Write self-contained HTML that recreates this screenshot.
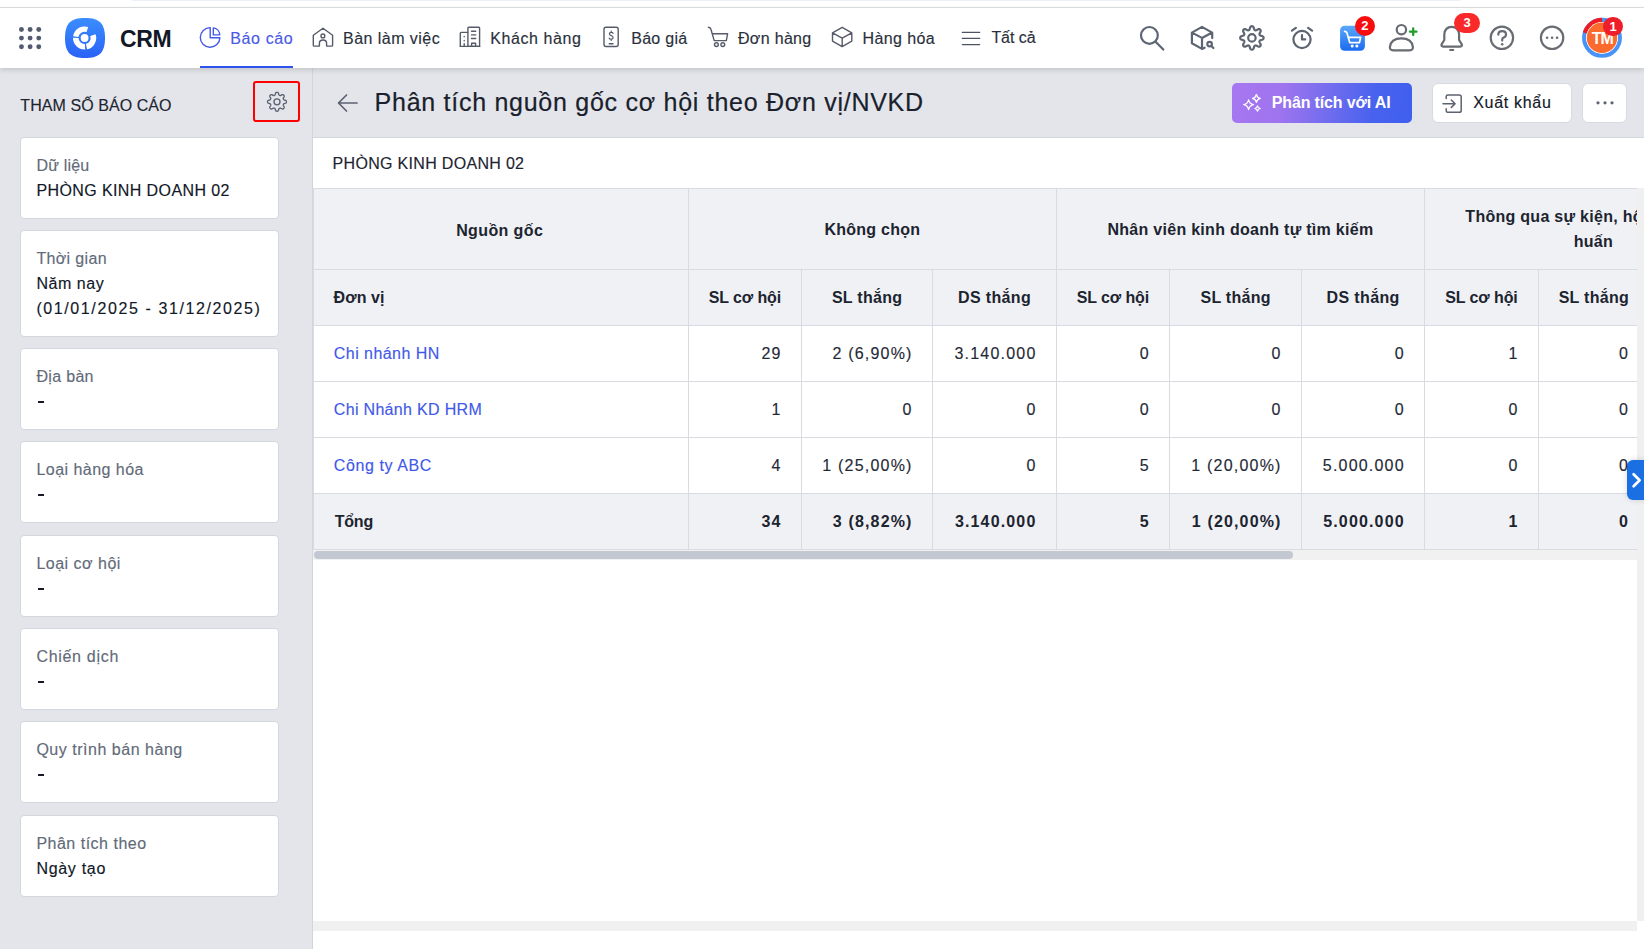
<!DOCTYPE html>
<html><head><meta charset="utf-8"><title>CRM</title>
<style>
html,body{margin:0;padding:0;}
body{width:1644px;height:949px;overflow:hidden;position:relative;background:#fff;font-family:"Liberation Sans",sans-serif;}
.t{position:absolute;white-space:nowrap;}
.r{-webkit-text-stroke:0.15px currentColor;}
.b{position:absolute;}
.ic{position:absolute;overflow:visible;z-index:2;}
.t{z-index:2;}
.badge{position:absolute;z-index:3;background:#ee1c25;color:#fff;font:700 13px/20px "Liberation Sans",sans-serif;text-align:center;}
</style></head><body>
<div class="b" style="left:132.00px;top:0.00px;width:1329.00px;height:1.00px;background:#ebf0fa;border-radius:0 0 3px 3px"></div>
<div class="b" style="left:0.00px;top:7.00px;width:1644.00px;height:1.00px;background:#dfe1e0;"></div>
<div class="b" style="left:0.00px;top:8.00px;width:1644.00px;height:60.00px;background:#fff;box-shadow:0 2px 5px rgba(0,0,0,.14);z-index:1"></div>
<svg class="ic" style="left:18.8px;top:26.8px;" width="23" height="23" viewBox="0 0 23 23"><circle cx="2.45" cy="2.45" r="2.45" fill="#535b6e"/><circle cx="2.45" cy="11.10" r="2.45" fill="#535b6e"/><circle cx="2.45" cy="19.75" r="2.45" fill="#535b6e"/><circle cx="11.10" cy="2.45" r="2.45" fill="#535b6e"/><circle cx="11.10" cy="11.10" r="2.45" fill="#535b6e"/><circle cx="11.10" cy="19.75" r="2.45" fill="#535b6e"/><circle cx="19.75" cy="2.45" r="2.45" fill="#535b6e"/><circle cx="19.75" cy="11.10" r="2.45" fill="#535b6e"/><circle cx="19.75" cy="19.75" r="2.45" fill="#535b6e"/></svg>
<svg class="ic" style="left:65.2px;top:18.1px;" width="40" height="40" viewBox="0 0 40 40"><defs><linearGradient id="lg" x1="0" y1="0" x2="0" y2="1"><stop offset="0" stop-color="#3b8dff"/><stop offset="1" stop-color="#2962f6"/></linearGradient></defs>
<path d="M20 0C34.5 0 40 5.5 40 20C40 34.5 34.5 40 20 40C5.5 40 0 34.5 0 20C0 5.5 5.5 0 20 0Z" fill="url(#lg)"/>
<path d="M8.14 18.19 A11.6 11.6 0 0 1 23.18 8.97 L21.55 14.01 A6.3 6.3 0 0 0 13.38 19.01ZM30.57 16.22 A11.6 11.6 0 0 1 22.01 31.35 L20.85 25.87 A6.0 6.0 0 0 0 25.27 18.05ZM20.21 31.58 A11.6 11.6 0 0 1 8.00 19.80 L13.60 19.90 A6.0 6.0 0 0 0 19.91 25.99Z" fill="#fff"/><circle cx="19.6" cy="20.0" r="3.9" fill="#fff"/></svg>
<div class="t" style="left:120.00px;top:25.33px;font-size:23px;line-height:29px;font-weight:700;color:#111827;letter-spacing:-0.3px;">CRM</div>
<svg class="ic" style="left:0;top:0;z-index:2" width="1644" height="70" viewBox="0 0 1644 70">
<g fill="none" stroke="#4559ea" stroke-width="1.4" stroke-linejoin="round">
 <path d="M210.2 27.6 A9.8 9.8 0 1 0 219.9 37.7 H210.2 Z"/>
 <path d="M213.3 27.9 A7.4 7.4 0 0 1 219.8 34.9 H213.3 Z"/>
</g>
<g fill="none" stroke="#555b68" stroke-width="1.4" stroke-linecap="round" stroke-linejoin="round">
 <path d="M323 28.2 L332.6 35.3 V45.2 Q332.6 46.1 331.7 46.1 H326.6 V43.2 Q326.6 40 323 40 Q319.4 40 319.4 43.2 V46.1 H314.2 Q313.3 46.1 313.3 45.2 V35.3 Z"/>
 <circle cx="322.9" cy="35.9" r="1.9"/>
</g>
<g fill="none" stroke="#555b68" stroke-width="1.4" stroke-linecap="round" stroke-linejoin="round">
 <path d="M460.3 46.4 V33.2 Q460.3 32.4 461.1 32.4 H467.6"/>
 <path d="M467.9 46.4 V28 Q467.9 27.2 468.7 27.2 H478.8 Q479.6 27.2 479.6 28 V46.4 Z"/>
 <path d="M460.3 46.4 H479.6"/>
 <path d="M471.5 31.3 H475.7 M471.5 34.9 H475.7 M471.5 38.5 H475.7"/>
 <path d="M471.6 46.4 V43.2 H475.6 V46.4"/>
 <path d="M464.2 36.4 V36.8 M464.2 40.4 V40.8 M464.2 43.8 V46.4"/>
</g>
<g fill="none" stroke="#555b68" stroke-width="1.4" stroke-linecap="round" stroke-linejoin="round">
 <rect x="604" y="27.3" width="14.2" height="19.2" rx="2"/>
 <path d="M609.3 43.7 H613"/>
 <path d="M613.1 33.3 Q612.8 32.3 611.2 32.3 Q609.4 32.3 609.4 33.8 Q609.4 35.1 611.2 35.6 Q613.1 36.1 613.1 37.7 Q613.1 39.2 611.2 39.2 Q609.6 39.2 609.2 38.2 M611.2 31.1 V32.3 M611.2 39.2 V40.4" stroke-width="1.2"/>
</g>
<g fill="none" stroke="#555b68" stroke-width="1.4" stroke-linecap="round" stroke-linejoin="round">
 <path d="M708.4 27.3 Q710.6 27.5 711 29.5 L714.2 40.6 H726.3 L727.6 33.8 H712.3"/>
 <circle cx="716.4" cy="44.6" r="1.9"/><circle cx="722.8" cy="44.6" r="1.9"/>
</g>
<g fill="none" stroke="#555b68" stroke-width="1.4" stroke-linecap="round" stroke-linejoin="round">
 <path d="M842.2 27.3 L851.8 32.9 V41.1 L842.2 46.6 L832.5 41.1 V32.9 Z M832.5 32.9 L842.2 38.2 L851.8 32.9 M842.2 38.2 V46.6"/>
</g>
<g fill="none" stroke="#4d5362" stroke-width="1.3" stroke-linecap="round">
 <path d="M962.3 32.3 H979.7 M962.3 38.4 H979.7 M962.3 44.6 H979.7"/>
</g>
<g fill="none" stroke="#5d6472" stroke-width="2.2" stroke-linecap="round" stroke-linejoin="round">
 <circle cx="1149.4" cy="35.4" r="8.4"/>
 <path d="M1155.8 41.9 L1163.3 49.6"/>
</g>
<g fill="none" stroke="#5d6472" stroke-width="2.2" stroke-linecap="round" stroke-linejoin="round">
 <path d="M1212.2 38.1 V32.6 L1202 26.9 L1191.9 32.6 V43.3 L1202 48.9 L1204.6 47.7 M1191.9 32.6 L1202 37.9 L1212.2 32.6 M1202 37.9 V48.9"/>
 <circle cx="1209.6" cy="44.1" r="2.3"/>
 <path d="M1211.4 46 L1213.4 48"/>
</g>
<path d="M1263.60 37.90 L1263.58 38.21 L1263.51 38.51 L1263.38 38.80 L1263.17 39.08 L1262.87 39.34 L1262.46 39.57 L1261.97 39.77 L1261.44 39.93 L1260.95 40.07 L1260.53 40.21 L1260.21 40.36 L1259.97 40.52 L1259.80 40.70 L1259.67 40.88 L1259.57 41.08 L1259.50 41.28 L1259.46 41.51 L1259.46 41.75 L1259.52 42.04 L1259.64 42.37 L1259.83 42.76 L1260.08 43.21 L1260.34 43.70 L1260.55 44.19 L1260.68 44.63 L1260.71 45.03 L1260.65 45.38 L1260.54 45.68 L1260.37 45.94 L1260.17 46.17 L1259.94 46.37 L1259.68 46.54 L1259.38 46.65 L1259.03 46.71 L1258.63 46.68 L1258.19 46.55 L1257.70 46.34 L1257.21 46.08 L1256.76 45.83 L1256.37 45.64 L1256.04 45.52 L1255.75 45.46 L1255.51 45.46 L1255.28 45.50 L1255.08 45.57 L1254.88 45.67 L1254.70 45.80 L1254.52 45.97 L1254.36 46.21 L1254.21 46.53 L1254.07 46.95 L1253.93 47.44 L1253.77 47.97 L1253.57 48.46 L1253.34 48.87 L1253.08 49.17 L1252.80 49.38 L1252.51 49.51 L1252.21 49.58 L1251.90 49.60 L1251.59 49.58 L1251.29 49.51 L1251.00 49.38 L1250.72 49.17 L1250.46 48.87 L1250.23 48.46 L1250.03 47.97 L1249.87 47.44 L1249.73 46.95 L1249.59 46.53 L1249.44 46.21 L1249.28 45.97 L1249.10 45.80 L1248.92 45.67 L1248.72 45.57 L1248.52 45.50 L1248.29 45.46 L1248.05 45.46 L1247.76 45.52 L1247.43 45.64 L1247.04 45.83 L1246.59 46.08 L1246.10 46.34 L1245.61 46.55 L1245.17 46.68 L1244.77 46.71 L1244.42 46.65 L1244.12 46.54 L1243.86 46.37 L1243.63 46.17 L1243.43 45.94 L1243.26 45.68 L1243.15 45.38 L1243.09 45.03 L1243.12 44.63 L1243.25 44.19 L1243.46 43.70 L1243.72 43.21 L1243.97 42.76 L1244.16 42.37 L1244.28 42.04 L1244.34 41.75 L1244.34 41.51 L1244.30 41.28 L1244.23 41.08 L1244.13 40.88 L1244.00 40.70 L1243.83 40.52 L1243.59 40.36 L1243.27 40.21 L1242.85 40.07 L1242.36 39.93 L1241.83 39.77 L1241.34 39.57 L1240.93 39.34 L1240.63 39.08 L1240.42 38.80 L1240.29 38.51 L1240.22 38.21 L1240.20 37.90 L1240.22 37.59 L1240.29 37.29 L1240.42 37.00 L1240.63 36.72 L1240.93 36.46 L1241.34 36.23 L1241.83 36.03 L1242.36 35.87 L1242.85 35.73 L1243.27 35.59 L1243.59 35.44 L1243.83 35.28 L1244.00 35.10 L1244.13 34.92 L1244.23 34.72 L1244.30 34.52 L1244.34 34.29 L1244.34 34.05 L1244.28 33.76 L1244.16 33.43 L1243.97 33.04 L1243.72 32.59 L1243.46 32.10 L1243.25 31.61 L1243.12 31.17 L1243.09 30.77 L1243.15 30.42 L1243.26 30.12 L1243.43 29.86 L1243.63 29.63 L1243.86 29.43 L1244.12 29.26 L1244.42 29.15 L1244.77 29.09 L1245.17 29.12 L1245.61 29.25 L1246.10 29.46 L1246.59 29.72 L1247.04 29.97 L1247.43 30.16 L1247.76 30.28 L1248.05 30.34 L1248.29 30.34 L1248.52 30.30 L1248.72 30.23 L1248.92 30.13 L1249.10 30.00 L1249.28 29.83 L1249.44 29.59 L1249.59 29.27 L1249.73 28.85 L1249.87 28.36 L1250.03 27.83 L1250.23 27.34 L1250.46 26.93 L1250.72 26.63 L1251.00 26.42 L1251.29 26.29 L1251.59 26.22 L1251.90 26.20 L1252.21 26.22 L1252.51 26.29 L1252.80 26.42 L1253.08 26.63 L1253.34 26.93 L1253.57 27.34 L1253.77 27.83 L1253.93 28.36 L1254.07 28.85 L1254.21 29.27 L1254.36 29.59 L1254.52 29.83 L1254.70 30.00 L1254.88 30.13 L1255.08 30.23 L1255.28 30.30 L1255.51 30.34 L1255.75 30.34 L1256.04 30.28 L1256.37 30.16 L1256.76 29.97 L1257.21 29.72 L1257.70 29.46 L1258.19 29.25 L1258.63 29.12 L1259.03 29.09 L1259.38 29.15 L1259.68 29.26 L1259.94 29.43 L1260.17 29.63 L1260.37 29.86 L1260.54 30.12 L1260.65 30.42 L1260.71 30.77 L1260.68 31.17 L1260.55 31.61 L1260.34 32.10 L1260.08 32.59 L1259.83 33.04 L1259.64 33.43 L1259.52 33.76 L1259.46 34.05 L1259.46 34.29 L1259.50 34.52 L1259.57 34.72 L1259.67 34.92 L1259.80 35.10 L1259.97 35.28 L1260.21 35.44 L1260.53 35.59 L1260.95 35.73 L1261.44 35.87 L1261.97 36.03 L1262.46 36.23 L1262.87 36.46 L1263.17 36.72 L1263.38 37.00 L1263.51 37.29 L1263.58 37.59Z" fill="none" stroke="#5d6472" stroke-width="2.2" stroke-linecap="round" stroke-linejoin="round"/>
<circle cx="1251.9" cy="37.9" r="3.7" fill="none" stroke="#5d6472" stroke-width="2.2" stroke-linecap="round" stroke-linejoin="round"/>
<g fill="none" stroke="#5d6472" stroke-width="2.2" stroke-linecap="round" stroke-linejoin="round">
 <circle cx="1302" cy="39.5" r="8.6"/>
 <path d="M1302 35 V39.4 H1305.2"/>
 <path d="M1291.9 30.6 L1295.9 27.9 M1312.1 30.6 L1308.1 27.9"/>
</g>
<defs><linearGradient id="cg" x1="0" y1="0" x2="0" y2="1"><stop offset="0" stop-color="#5aa7fb"/><stop offset="1" stop-color="#1c6bef"/></linearGradient></defs>
<rect x="1340.1" y="25.8" width="24.8" height="25" rx="4.5" fill="url(#cg)"/>
<g fill="none" stroke="#fff" stroke-width="1.7" stroke-linecap="round" stroke-linejoin="round">
 <path d="M1344.6 31.3 Q1346.5 31.3 1347 33 L1349.8 42.7 H1359.4 L1360.6 37.4 H1348.2"/>
</g>
<circle cx="1352.2" cy="45.9" r="1.5" fill="#fff"/><circle cx="1356.9" cy="45.9" r="1.5" fill="#fff"/>
<g fill="none" stroke="#676b72" stroke-width="2.2" stroke-linecap="round" stroke-linejoin="round">
 <circle cx="1401.4" cy="29.7" r="4.7"/>
 <path d="M1393.2 50.3 Q1389.8 50.3 1389.9 47.2 Q1390.8 38.4 1401.4 38.4 Q1412 38.4 1412.9 47.2 Q1413 50.3 1409.6 50.3 Z"/>
</g>
<path d="M1413.2 28.4 V35 M1409.9 31.7 H1416.5" stroke="#1e9e2b" stroke-width="2.3" stroke-linecap="round"/>
<g fill="none" stroke="#676b72" stroke-width="2.2" stroke-linecap="round" stroke-linejoin="round">
 <path d="M1451.7 26.8 Q1444.8 26.8 1444.3 34.5 V40 L1441.6 44.3 Q1440.9 46.5 1443.2 46.6 H1460.2 Q1462.5 46.5 1461.8 44.3 L1459.1 40 V34.5 Q1458.6 26.8 1451.7 26.8 Z"/>
 <path d="M1450.2 50 H1453.2"/>
</g>
<g fill="none" stroke="#686c73" stroke-width="2.2" stroke-linecap="round" stroke-linejoin="round">
 <circle cx="1501.9" cy="37.8" r="11.2"/>
 <path d="M1498.3 34.6 Q1498.4 31.2 1502.1 31.2 Q1506 31.2 1506 34.5 Q1506 36.6 1503.6 37.6 Q1502.2 38.3 1502.2 39.8 V40.6"/>
 <circle cx="1502.2" cy="44.2" r="1.25" fill="#686c73" stroke="none"/>
</g>
<g fill="none" stroke="#686c73" stroke-width="2.2" stroke-linecap="round" stroke-linejoin="round">
 <circle cx="1552.1" cy="37.8" r="11.2"/>
</g>
<g fill="#676b72"><circle cx="1547.1" cy="37.8" r="1.3"/><circle cx="1552.1" cy="37.8" r="1.3"/><circle cx="1557.1" cy="37.8" r="1.3"/></g>
<circle cx="1602" cy="37.8" r="17.9" fill="none" stroke="#4893f7" stroke-width="4.1"/>
<path d="M1584.8 32.9 A17.9 17.9 0 0 1 1602 19.9" fill="none" stroke="#ee1c25" stroke-width="4.1"/>
<circle cx="1602" cy="37.8" r="15.8" fill="#fff"/>
<circle cx="1602" cy="37.8" r="15.2" fill="#fd6a2d"/>
</svg>
<div class="t r" style="left:230.30px;top:29.16px;font-size:16px;line-height:20px;font-weight:400;color:#4a5ae6;letter-spacing:0.62px;">Báo cáo</div>
<div class="b" style="left:200.00px;top:66.00px;width:93.00px;height:2.00px;background:#2f53eb;z-index:3"></div>
<div class="t r" style="left:343.00px;top:29.16px;font-size:16px;line-height:20px;font-weight:400;color:#2a303b;letter-spacing:0.46px;">Bàn làm việc</div>
<div class="t r" style="left:490.30px;top:29.16px;font-size:16px;line-height:20px;font-weight:400;color:#2a303b;letter-spacing:0.57px;">Khách hàng</div>
<div class="t r" style="left:631.20px;top:29.16px;font-size:16px;line-height:20px;font-weight:400;color:#2a303b;letter-spacing:0.3px;">Báo giá</div>
<div class="t r" style="left:738.00px;top:29.16px;font-size:16px;line-height:20px;font-weight:400;color:#2a303b;letter-spacing:0.32px;">Đơn hàng</div>
<div class="t r" style="left:862.50px;top:29.16px;font-size:16px;line-height:20px;font-weight:400;color:#2a303b;letter-spacing:0.4px;">Hàng hóa</div>
<div class="t r" style="left:991.40px;top:28.16px;font-size:16px;line-height:20px;font-weight:400;color:#2a303b;letter-spacing:-0.05px;">Tất cả</div>
<div class="badge" style="left:1355px;top:16px;width:19.6px;height:19.6px;border-radius:10px;background:#f70d0d">2</div>
<div class="badge" style="left:1454.2px;top:13px;width:26px;height:19.6px;border-radius:10px;background:#fb2a2a">3</div>
<div class="t" style="left:1586.40px;top:29.06px;width:32.00px;text-align:center;font-size:16px;line-height:20px;font-weight:700;color:#fff;letter-spacing:-0.8px;z-index:3">TM</div>
<div class="badge" style="left:1603.4px;top:16.9px;width:19.6px;height:19.6px;border-radius:10px;z-index:4;background:#ee1d2b">1</div>
<div class="b" style="left:0.00px;top:68.00px;width:312.00px;height:881.00px;background:#e3e5ea;"></div>
<div class="b" style="left:312.00px;top:68.00px;width:1.00px;height:881.00px;background:#d2d5dc;"></div>
<div class="t r" style="left:20.30px;top:96.16px;font-size:16px;line-height:20px;font-weight:400;color:#1c2430;letter-spacing:0.07px;">THAM SỐ BÁO CÁO</div>
<div class="b" style="left:253.00px;top:81.00px;width:47.00px;height:41.00px;background:transparent;box-sizing:border-box;border:2.6px solid #f00;border-radius:3px"></div>
<svg class="ic" style="left:0;top:0" width="320" height="130" viewBox="0 0 320 130"><path d="M286.45 101.80 L286.44 102.05 L286.40 102.29 L286.34 102.53 L286.22 102.77 L286.02 102.99 L285.71 103.18 L285.28 103.34 L284.80 103.46 L284.37 103.57 L284.05 103.69 L283.84 103.82 L283.69 103.97 L283.58 104.13 L283.50 104.29 L283.42 104.46 L283.36 104.63 L283.30 104.81 L283.27 104.99 L283.27 105.20 L283.32 105.45 L283.46 105.76 L283.69 106.14 L283.94 106.57 L284.14 106.98 L284.22 107.34 L284.20 107.63 L284.12 107.88 L284.00 108.10 L283.85 108.30 L283.68 108.48 L283.50 108.65 L283.30 108.80 L283.08 108.92 L282.83 109.00 L282.54 109.02 L282.18 108.94 L281.77 108.74 L281.34 108.49 L280.96 108.26 L280.65 108.12 L280.40 108.07 L280.19 108.07 L280.01 108.10 L279.83 108.16 L279.66 108.22 L279.49 108.30 L279.33 108.38 L279.17 108.49 L279.02 108.64 L278.89 108.85 L278.77 109.17 L278.66 109.60 L278.54 110.08 L278.38 110.51 L278.19 110.82 L277.97 111.02 L277.73 111.14 L277.49 111.20 L277.25 111.24 L277.00 111.25 L276.75 111.24 L276.51 111.20 L276.27 111.14 L276.03 111.02 L275.81 110.82 L275.62 110.51 L275.46 110.08 L275.34 109.60 L275.23 109.17 L275.11 108.85 L274.98 108.64 L274.83 108.49 L274.67 108.38 L274.51 108.30 L274.34 108.22 L274.17 108.16 L273.99 108.10 L273.81 108.07 L273.60 108.07 L273.35 108.12 L273.04 108.26 L272.66 108.49 L272.23 108.74 L271.82 108.94 L271.46 109.02 L271.17 109.00 L270.92 108.92 L270.70 108.80 L270.50 108.65 L270.32 108.48 L270.15 108.30 L270.00 108.10 L269.88 107.88 L269.80 107.63 L269.78 107.34 L269.86 106.98 L270.06 106.57 L270.31 106.14 L270.54 105.76 L270.68 105.45 L270.73 105.20 L270.73 104.99 L270.70 104.81 L270.64 104.63 L270.58 104.46 L270.50 104.29 L270.42 104.13 L270.31 103.97 L270.16 103.82 L269.95 103.69 L269.63 103.57 L269.20 103.46 L268.72 103.34 L268.29 103.18 L267.98 102.99 L267.78 102.77 L267.66 102.53 L267.60 102.29 L267.56 102.05 L267.55 101.80 L267.56 101.55 L267.60 101.31 L267.66 101.07 L267.78 100.83 L267.98 100.61 L268.29 100.42 L268.72 100.26 L269.20 100.14 L269.63 100.03 L269.95 99.91 L270.16 99.78 L270.31 99.63 L270.42 99.47 L270.50 99.31 L270.58 99.14 L270.64 98.97 L270.70 98.79 L270.73 98.61 L270.73 98.40 L270.68 98.15 L270.54 97.84 L270.31 97.46 L270.06 97.03 L269.86 96.62 L269.78 96.26 L269.80 95.97 L269.88 95.72 L270.00 95.50 L270.15 95.30 L270.32 95.12 L270.50 94.95 L270.70 94.80 L270.92 94.68 L271.17 94.60 L271.46 94.58 L271.82 94.66 L272.23 94.86 L272.66 95.11 L273.04 95.34 L273.35 95.48 L273.60 95.53 L273.81 95.53 L273.99 95.50 L274.17 95.44 L274.34 95.38 L274.51 95.30 L274.67 95.22 L274.83 95.11 L274.98 94.96 L275.11 94.75 L275.23 94.43 L275.34 94.00 L275.46 93.52 L275.62 93.09 L275.81 92.78 L276.03 92.58 L276.27 92.46 L276.51 92.40 L276.75 92.36 L277.00 92.35 L277.25 92.36 L277.49 92.40 L277.73 92.46 L277.97 92.58 L278.19 92.78 L278.38 93.09 L278.54 93.52 L278.66 94.00 L278.77 94.43 L278.89 94.75 L279.02 94.96 L279.17 95.11 L279.33 95.22 L279.49 95.30 L279.66 95.38 L279.83 95.44 L280.01 95.50 L280.19 95.53 L280.40 95.53 L280.65 95.48 L280.96 95.34 L281.34 95.11 L281.77 94.86 L282.18 94.66 L282.54 94.58 L282.83 94.60 L283.08 94.68 L283.30 94.80 L283.50 94.95 L283.68 95.12 L283.85 95.30 L284.00 95.50 L284.12 95.72 L284.20 95.97 L284.22 96.26 L284.14 96.62 L283.94 97.03 L283.69 97.46 L283.46 97.84 L283.32 98.15 L283.27 98.40 L283.27 98.61 L283.30 98.79 L283.36 98.97 L283.42 99.14 L283.50 99.31 L283.58 99.47 L283.69 99.63 L283.84 99.78 L284.05 99.91 L284.37 100.03 L284.80 100.14 L285.28 100.26 L285.71 100.42 L286.02 100.61 L286.22 100.83 L286.34 101.07 L286.40 101.31 L286.44 101.55Z" fill="none" stroke="#5b6270" stroke-width="1.35" stroke-linejoin="round"/><circle cx="277" cy="101.8" r="3" fill="none" stroke="#5b6270" stroke-width="1.35"/></svg>
<div class="b" style="left:20.00px;top:137.00px;width:259.00px;height:81.60px;background:#fff;box-sizing:border-box;border:1px solid #d3d7de;border-radius:4px"></div>
<div class="t r" style="left:36.40px;top:155.76px;font-size:16px;line-height:20px;font-weight:400;color:#626a78;letter-spacing:0.2px;">Dữ liệu</div>
<div class="t r" style="left:36.40px;top:180.96px;font-size:16px;line-height:20px;font-weight:400;color:#111827;letter-spacing:0.4px;">PHÒNG KINH DOANH 02</div>
<div class="b" style="left:20.00px;top:230.00px;width:259.00px;height:107.00px;background:#fff;box-sizing:border-box;border:1px solid #d3d7de;border-radius:4px"></div>
<div class="t r" style="left:36.40px;top:248.76px;font-size:16px;line-height:20px;font-weight:400;color:#626a78;letter-spacing:0.35px;">Thời gian</div>
<div class="t r" style="left:36.40px;top:273.96px;font-size:16px;line-height:20px;font-weight:400;color:#111827;letter-spacing:0.55px;">Năm nay</div>
<div class="t r" style="left:36.40px;top:298.56px;font-size:16px;line-height:20px;font-weight:400;color:#111827;letter-spacing:1.6px;">(01/01/2025 - 31/12/2025)</div>
<div class="b" style="left:20.00px;top:348.00px;width:259.00px;height:81.60px;background:#fff;box-sizing:border-box;border:1px solid #d3d7de;border-radius:4px"></div>
<div class="t r" style="left:36.40px;top:366.76px;font-size:16px;line-height:20px;font-weight:400;color:#626a78;letter-spacing:0.33px;">Địa bàn</div>
<div class="b" style="left:38.20px;top:400.90px;width:5.80px;height:2.00px;background:#161b26;z-index:2"></div>
<div class="b" style="left:20.00px;top:441.40px;width:259.00px;height:81.60px;background:#fff;box-sizing:border-box;border:1px solid #d3d7de;border-radius:4px"></div>
<div class="t r" style="left:36.40px;top:460.16px;font-size:16px;line-height:20px;font-weight:400;color:#626a78;letter-spacing:0.47px;">Loại hàng hóa</div>
<div class="b" style="left:38.20px;top:494.30px;width:5.80px;height:2.00px;background:#161b26;z-index:2"></div>
<div class="b" style="left:20.00px;top:535.00px;width:259.00px;height:81.60px;background:#fff;box-sizing:border-box;border:1px solid #d3d7de;border-radius:4px"></div>
<div class="t r" style="left:36.40px;top:553.76px;font-size:16px;line-height:20px;font-weight:400;color:#626a78;letter-spacing:0.5px;">Loại cơ hội</div>
<div class="b" style="left:38.20px;top:587.90px;width:5.80px;height:2.00px;background:#161b26;z-index:2"></div>
<div class="b" style="left:20.00px;top:628.20px;width:259.00px;height:81.60px;background:#fff;box-sizing:border-box;border:1px solid #d3d7de;border-radius:4px"></div>
<div class="t r" style="left:36.40px;top:646.96px;font-size:16px;line-height:20px;font-weight:400;color:#626a78;letter-spacing:0.7px;">Chiến dịch</div>
<div class="b" style="left:38.20px;top:681.10px;width:5.80px;height:2.00px;background:#161b26;z-index:2"></div>
<div class="b" style="left:20.00px;top:721.40px;width:259.00px;height:81.60px;background:#fff;box-sizing:border-box;border:1px solid #d3d7de;border-radius:4px"></div>
<div class="t r" style="left:36.40px;top:740.16px;font-size:16px;line-height:20px;font-weight:400;color:#626a78;letter-spacing:0.52px;">Quy trình bán hàng</div>
<div class="b" style="left:38.20px;top:774.30px;width:5.80px;height:2.00px;background:#161b26;z-index:2"></div>
<div class="b" style="left:20.00px;top:815.00px;width:259.00px;height:81.60px;background:#fff;box-sizing:border-box;border:1px solid #d3d7de;border-radius:4px"></div>
<div class="t r" style="left:36.40px;top:833.76px;font-size:16px;line-height:20px;font-weight:400;color:#626a78;letter-spacing:0.5px;">Phân tích theo</div>
<div class="t r" style="left:36.40px;top:858.96px;font-size:16px;line-height:20px;font-weight:400;color:#111827;letter-spacing:0.7px;">Ngày tạo</div>
<div class="b" style="left:313.00px;top:68.00px;width:1331.00px;height:69.50px;background:#e3e5ea;"></div>
<svg class="ic" style="left:336px;top:92px;" width="24" height="22" viewBox="0 0 24 22"><g fill="none" stroke="#5b6270" stroke-width="1.7" stroke-linecap="round" stroke-linejoin="round"><path d="M21 11 H3 M10.5 3 L2.5 11 L10.5 19"/></g></svg>
<div class="t r" style="left:374.60px;top:86.94px;font-size:25px;line-height:31px;font-weight:400;color:#1a212c;letter-spacing:0.73px;-webkit-text-stroke:0.2px #1a212c">Phân tích nguồn gốc cơ hội theo Đơn vị/NVKD</div>
<div class="b" style="left:1232.00px;top:83.00px;width:180.00px;height:40.00px;background:linear-gradient(100deg,#a677f0 0%,#9f74ef 28%,#6f6cee 55%,#4862ee 78%,#3f5fee 100%);border-radius:5px"></div>
<svg class="ic" style="left:0;top:0" width="1644" height="130" viewBox="0 0 1644 130"><g fill="none" stroke="#fff" stroke-width="1.25" stroke-linejoin="round"><path d="M1248.60 99.80 Q1249.48 103.82 1253.50 104.70 Q1249.48 105.58 1248.60 109.60 Q1247.72 105.58 1243.70 104.70 Q1247.72 103.82 1248.60 99.80Z"/><path d="M1256.40 94.50 Q1257.10 97.70 1260.30 98.40 Q1257.10 99.10 1256.40 102.30 Q1255.70 99.10 1252.50 98.40 Q1255.70 97.70 1256.40 94.50Z"/><path d="M1257.50 105.80 Q1257.99 108.01 1260.20 108.50 Q1257.99 108.99 1257.50 111.20 Q1257.01 108.99 1254.80 108.50 Q1257.01 108.01 1257.50 105.80Z"/></g></svg>
<div class="t" style="left:1271.80px;top:93.16px;font-size:16px;line-height:20px;font-weight:700;color:#fff;letter-spacing:-0.15px;">Phân tích với AI</div>
<div class="b" style="left:1432.00px;top:83.00px;width:140.00px;height:40.00px;background:#fff;box-sizing:border-box;border:1px solid #d7dae0;border-radius:6px"></div>
<svg class="ic" style="left:1441px;top:93px;" width="23" height="22" viewBox="0 0 23 22"><g fill="none" stroke="#5b6270" stroke-width="1.5" stroke-linecap="round" stroke-linejoin="round"><path d="M5.2 5.5 V3.5 Q5.2 2 6.7 2 H18.3 Q20.2 2 20.2 3.9 V17.4 Q20.2 19.3 18.3 19.3 H6.7 Q5.2 19.3 5.2 17.8 V15.8"/><path d="M2 10.7 H14 M10.3 7 L14.1 10.7 L10.3 14.4"/></g></svg>
<div class="t r" style="left:1473.20px;top:93.16px;font-size:16px;line-height:20px;font-weight:400;color:#111827;letter-spacing:0.7px;">Xuất khẩu</div>
<div class="b" style="left:1582.00px;top:83.00px;width:45.00px;height:40.00px;background:#fff;box-sizing:border-box;border:1px solid #d7dae0;border-radius:6px"></div>
<svg class="ic" style="left:1595px;top:100px;" width="20" height="6" viewBox="0 0 20 6"><g fill="#5b6270"><circle cx="3" cy="2.8" r="1.6"/><circle cx="10" cy="2.8" r="1.6"/><circle cx="17" cy="2.8" r="1.6"/></g></svg>
<div class="b" style="left:313.00px;top:137.00px;width:1331.00px;height:784.00px;background:#fff;box-sizing:border-box;border-top:1px solid #d3d7de"></div>
<div class="b" style="left:1637.00px;top:188.00px;width:7.00px;height:733.00px;background:#f0f0f0;"></div>
<div class="b" style="left:313.00px;top:921.00px;width:1324.00px;height:10.00px;background:#f0f0f0;"></div>
<div class="b" style="left:313.00px;top:931.00px;width:1331.00px;height:18.00px;background:#fff;"></div>
<div class="t r" style="left:332.60px;top:154.06px;font-size:16px;line-height:20px;font-weight:400;color:#1c2430;letter-spacing:0.31px;">PHÒNG KINH DOANH 02</div>
<div style="position:absolute;left:313px;top:0;width:1324px;height:949px;overflow:hidden">
<div class="b" style="left:0.00px;top:188.00px;width:1340.00px;height:137.00px;background:#f0f1f4;"></div>
<div class="b" style="left:0.00px;top:493.00px;width:1340.00px;height:56.00px;background:#f0f1f4;"></div>
<div class="b" style="left:0.00px;top:188.00px;width:1340.00px;height:1.00px;background:#d9dbe2;"></div>
<div class="b" style="left:0.00px;top:269.00px;width:1340.00px;height:1.00px;background:#d9dbe2;"></div>
<div class="b" style="left:0.00px;top:325.00px;width:1340.00px;height:1.00px;background:#d9dbe2;"></div>
<div class="b" style="left:0.00px;top:381.00px;width:1340.00px;height:1.00px;background:#d9dbe2;"></div>
<div class="b" style="left:0.00px;top:437.00px;width:1340.00px;height:1.00px;background:#d9dbe2;"></div>
<div class="b" style="left:0.00px;top:493.00px;width:1340.00px;height:1.00px;background:#d9dbe2;"></div>
<div class="b" style="left:0.00px;top:549.00px;width:1340.00px;height:1.00px;background:#d9dbe2;"></div>
<div class="b" style="left:0.00px;top:188.00px;width:1.00px;height:362.00px;background:#d9dbe2;"></div>
<div class="b" style="left:375.00px;top:188.00px;width:1.00px;height:362.00px;background:#d9dbe2;"></div>
<div class="b" style="left:488.00px;top:269.00px;width:1.00px;height:281.00px;background:#d9dbe2;"></div>
<div class="b" style="left:619.00px;top:269.00px;width:1.00px;height:281.00px;background:#d9dbe2;"></div>
<div class="b" style="left:743.00px;top:188.00px;width:1.00px;height:362.00px;background:#d9dbe2;"></div>
<div class="b" style="left:856.00px;top:269.00px;width:1.00px;height:281.00px;background:#d9dbe2;"></div>
<div class="b" style="left:988.00px;top:269.00px;width:1.00px;height:281.00px;background:#d9dbe2;"></div>
<div class="b" style="left:1111.00px;top:188.00px;width:1.00px;height:362.00px;background:#d9dbe2;"></div>
<div class="b" style="left:1225.00px;top:269.00px;width:1.00px;height:281.00px;background:#d9dbe2;"></div>
<div class="b" style="left:1336.00px;top:188.00px;width:1.00px;height:362.00px;background:#d9dbe2;"></div>
<div class="t" style="left:-0.80px;top:220.66px;width:375.00px;text-align:center;font-size:16px;line-height:20px;font-weight:700;color:#1c2430;letter-spacing:0.4px;">Nguồn gốc</div>
<div class="t" style="left:375.50px;top:220.36px;width:367.80px;text-align:center;font-size:16px;line-height:20px;font-weight:700;color:#1c2430;letter-spacing:0.25px;">Không chọn</div>
<div class="t" style="left:743.30px;top:220.06px;width:368.30px;text-align:center;font-size:16px;line-height:20px;font-weight:700;color:#1c2430;letter-spacing:0.28px;">Nhân viên kinh doanh tự tìm kiếm</div>
<div class="t" style="left:1080.40px;top:207.46px;width:400.00px;text-align:center;font-size:16px;line-height:20px;font-weight:700;color:#1c2430;letter-spacing:0.28px;">Thông qua sự kiện, hội thảo, tập</div>
<div class="t" style="left:1080.40px;top:231.96px;width:400.00px;text-align:center;font-size:16px;line-height:20px;font-weight:700;color:#1c2430;letter-spacing:0.28px;">huấn</div>
<div class="t" style="left:20.50px;top:288.06px;font-size:16px;line-height:20px;font-weight:700;color:#1c2430;letter-spacing:0.1px;">Đơn vị</div>
<div class="t" style="left:375.45px;top:287.86px;width:113.00px;text-align:center;font-size:16px;line-height:20px;font-weight:700;color:#1c2430;letter-spacing:-0.1px;">SL cơ hội</div>
<div class="t" style="left:488.63px;top:287.86px;width:130.90px;text-align:center;font-size:16px;line-height:20px;font-weight:700;color:#1c2430;letter-spacing:0.27px;">SL thắng</div>
<div class="t" style="left:619.58px;top:287.86px;width:123.90px;text-align:center;font-size:16px;line-height:20px;font-weight:700;color:#1c2430;letter-spacing:0.36px;">DS thắng</div>
<div class="t" style="left:743.25px;top:287.86px;width:113.30px;text-align:center;font-size:16px;line-height:20px;font-weight:700;color:#1c2430;letter-spacing:-0.1px;">SL cơ hội</div>
<div class="t" style="left:856.73px;top:287.86px;width:131.80px;text-align:center;font-size:16px;line-height:20px;font-weight:700;color:#1c2430;letter-spacing:0.27px;">SL thắng</div>
<div class="t" style="left:988.58px;top:287.86px;width:123.20px;text-align:center;font-size:16px;line-height:20px;font-weight:700;color:#1c2430;letter-spacing:0.36px;">DS thắng</div>
<div class="t" style="left:1111.55px;top:287.86px;width:113.80px;text-align:center;font-size:16px;line-height:20px;font-weight:700;color:#1c2430;letter-spacing:-0.1px;">SL cơ hội</div>
<div class="t" style="left:1225.54px;top:287.86px;width:110.60px;text-align:center;font-size:16px;line-height:20px;font-weight:700;color:#1c2430;letter-spacing:0.27px;">SL thắng</div>
<div class="t r" style="left:20.80px;top:343.66px;font-size:16px;line-height:20px;font-weight:400;color:#3f59e8;letter-spacing:0.45px;">Chi nhánh HN</div>
<div class="t r" style="left:375.50px;top:343.66px;width:93.20px;text-align:right;font-size:16px;line-height:20px;font-weight:400;color:#1f2937;letter-spacing:1.2px;">29</div>
<div class="t r" style="left:488.50px;top:343.66px;width:111.10px;text-align:right;font-size:16px;line-height:20px;font-weight:400;color:#1f2937;letter-spacing:1.2px;">2 (6,90%)</div>
<div class="t r" style="left:619.40px;top:343.66px;width:104.10px;text-align:right;font-size:16px;line-height:20px;font-weight:400;color:#1f2937;letter-spacing:1.2px;">3.140.000</div>
<div class="t r" style="left:743.30px;top:343.66px;width:93.50px;text-align:right;font-size:16px;line-height:20px;font-weight:400;color:#1f2937;letter-spacing:1.2px;">0</div>
<div class="t r" style="left:856.60px;top:343.66px;width:112.00px;text-align:right;font-size:16px;line-height:20px;font-weight:400;color:#1f2937;letter-spacing:1.2px;">0</div>
<div class="t r" style="left:988.40px;top:343.66px;width:103.40px;text-align:right;font-size:16px;line-height:20px;font-weight:400;color:#1f2937;letter-spacing:1.2px;">0</div>
<div class="t r" style="left:1111.60px;top:343.66px;width:94.00px;text-align:right;font-size:16px;line-height:20px;font-weight:400;color:#1f2937;letter-spacing:1.2px;">1</div>
<div class="t r" style="left:1225.40px;top:343.66px;width:90.80px;text-align:right;font-size:16px;line-height:20px;font-weight:400;color:#1f2937;letter-spacing:1.2px;">0</div>
<div class="t r" style="left:20.80px;top:399.66px;font-size:16px;line-height:20px;font-weight:400;color:#3f59e8;letter-spacing:0.32px;">Chi Nhánh KD HRM</div>
<div class="t r" style="left:375.50px;top:399.66px;width:93.20px;text-align:right;font-size:16px;line-height:20px;font-weight:400;color:#1f2937;letter-spacing:1.2px;">1</div>
<div class="t r" style="left:488.50px;top:399.66px;width:111.10px;text-align:right;font-size:16px;line-height:20px;font-weight:400;color:#1f2937;letter-spacing:1.2px;">0</div>
<div class="t r" style="left:619.40px;top:399.66px;width:104.10px;text-align:right;font-size:16px;line-height:20px;font-weight:400;color:#1f2937;letter-spacing:1.2px;">0</div>
<div class="t r" style="left:743.30px;top:399.66px;width:93.50px;text-align:right;font-size:16px;line-height:20px;font-weight:400;color:#1f2937;letter-spacing:1.2px;">0</div>
<div class="t r" style="left:856.60px;top:399.66px;width:112.00px;text-align:right;font-size:16px;line-height:20px;font-weight:400;color:#1f2937;letter-spacing:1.2px;">0</div>
<div class="t r" style="left:988.40px;top:399.66px;width:103.40px;text-align:right;font-size:16px;line-height:20px;font-weight:400;color:#1f2937;letter-spacing:1.2px;">0</div>
<div class="t r" style="left:1111.60px;top:399.66px;width:94.00px;text-align:right;font-size:16px;line-height:20px;font-weight:400;color:#1f2937;letter-spacing:1.2px;">0</div>
<div class="t r" style="left:1225.40px;top:399.66px;width:90.80px;text-align:right;font-size:16px;line-height:20px;font-weight:400;color:#1f2937;letter-spacing:1.2px;">0</div>
<div class="t r" style="left:20.80px;top:455.66px;font-size:16px;line-height:20px;font-weight:400;color:#3f59e8;letter-spacing:0.6px;">Công ty ABC</div>
<div class="t r" style="left:375.50px;top:455.66px;width:93.20px;text-align:right;font-size:16px;line-height:20px;font-weight:400;color:#1f2937;letter-spacing:1.2px;">4</div>
<div class="t r" style="left:488.50px;top:455.66px;width:111.10px;text-align:right;font-size:16px;line-height:20px;font-weight:400;color:#1f2937;letter-spacing:1.2px;">1 (25,00%)</div>
<div class="t r" style="left:619.40px;top:455.66px;width:104.10px;text-align:right;font-size:16px;line-height:20px;font-weight:400;color:#1f2937;letter-spacing:1.2px;">0</div>
<div class="t r" style="left:743.30px;top:455.66px;width:93.50px;text-align:right;font-size:16px;line-height:20px;font-weight:400;color:#1f2937;letter-spacing:1.2px;">5</div>
<div class="t r" style="left:856.60px;top:455.66px;width:112.00px;text-align:right;font-size:16px;line-height:20px;font-weight:400;color:#1f2937;letter-spacing:1.2px;">1 (20,00%)</div>
<div class="t r" style="left:988.40px;top:455.66px;width:103.40px;text-align:right;font-size:16px;line-height:20px;font-weight:400;color:#1f2937;letter-spacing:1.2px;">5.000.000</div>
<div class="t r" style="left:1111.60px;top:455.66px;width:94.00px;text-align:right;font-size:16px;line-height:20px;font-weight:400;color:#1f2937;letter-spacing:1.2px;">0</div>
<div class="t r" style="left:1225.40px;top:455.66px;width:90.80px;text-align:right;font-size:16px;line-height:20px;font-weight:400;color:#1f2937;letter-spacing:1.2px;">0</div>
<div class="t" style="left:21.70px;top:511.66px;font-size:16px;line-height:20px;font-weight:700;color:#1c2430;letter-spacing:-0.2px;">Tổng</div>
<div class="t" style="left:375.50px;top:511.66px;width:93.15px;text-align:right;font-size:16px;line-height:20px;font-weight:700;color:#1c2430;letter-spacing:1.15px;">34</div>
<div class="t" style="left:488.50px;top:511.66px;width:111.05px;text-align:right;font-size:16px;line-height:20px;font-weight:700;color:#1c2430;letter-spacing:1.15px;">3 (8,82%)</div>
<div class="t" style="left:619.40px;top:511.66px;width:104.05px;text-align:right;font-size:16px;line-height:20px;font-weight:700;color:#1c2430;letter-spacing:1.15px;">3.140.000</div>
<div class="t" style="left:743.30px;top:511.66px;width:93.45px;text-align:right;font-size:16px;line-height:20px;font-weight:700;color:#1c2430;letter-spacing:1.15px;">5</div>
<div class="t" style="left:856.60px;top:511.66px;width:111.95px;text-align:right;font-size:16px;line-height:20px;font-weight:700;color:#1c2430;letter-spacing:1.15px;">1 (20,00%)</div>
<div class="t" style="left:988.40px;top:511.66px;width:103.35px;text-align:right;font-size:16px;line-height:20px;font-weight:700;color:#1c2430;letter-spacing:1.15px;">5.000.000</div>
<div class="t" style="left:1111.60px;top:511.66px;width:93.95px;text-align:right;font-size:16px;line-height:20px;font-weight:700;color:#1c2430;letter-spacing:1.15px;">1</div>
<div class="t" style="left:1225.40px;top:511.66px;width:90.75px;text-align:right;font-size:16px;line-height:20px;font-weight:700;color:#1c2430;letter-spacing:1.15px;">0</div>
</div>
<div class="b" style="left:313.00px;top:550.00px;width:1324.00px;height:10.00px;background:#f1f1f2;"></div>
<div class="b" style="left:314.00px;top:551.00px;width:979.00px;height:8.00px;background:#c3c7d1;border-radius:4px"></div>
<div class="b" style="left:1627.00px;top:460.00px;width:20.00px;height:40.00px;background:#1a6fe3;border-radius:6px 0 0 6px;box-shadow:0 0 6px rgba(0,0,0,.15)"></div>
<svg class="ic" style="left:1630px;top:472px;" width="12" height="16" viewBox="0 0 12 16"><path d="M3.6 2.2 L9.6 8.2 L3.6 14.2" fill="none" stroke="#fff" stroke-width="2.7" stroke-linecap="round" stroke-linejoin="round"/></svg>
</body></html>
